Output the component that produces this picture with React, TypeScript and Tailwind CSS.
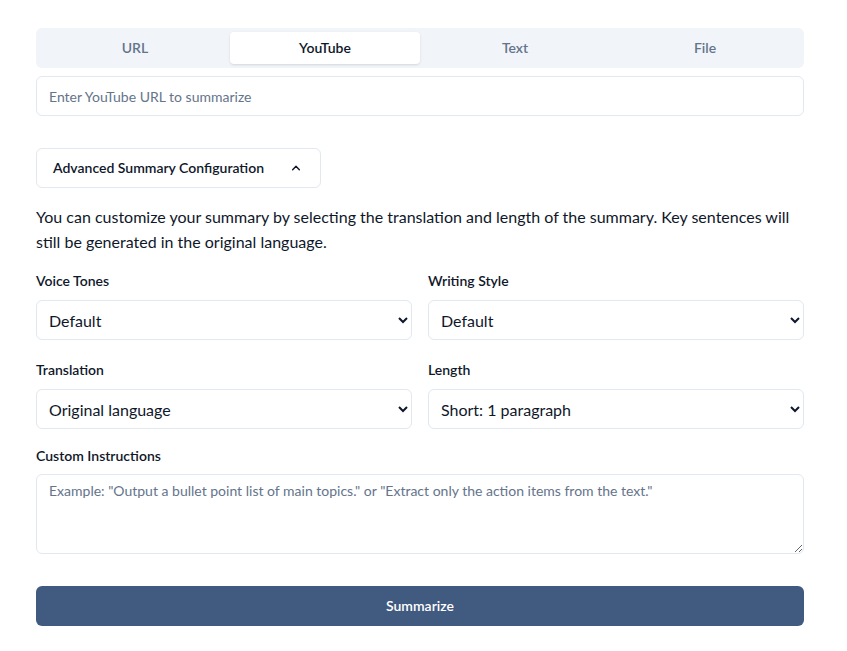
import React from "react";

export default function App() {
  const tabs = ["URL", "YouTube", "Text", "File"];
  return (
    <div className="min-h-screen bg-white" style={{ fontFamily: "Lato, 'Noto Sans', sans-serif" }}>
      <div className="ml-9 w-[768px] pt-7 pb-6">
        <div className="grid h-10 grid-cols-4 rounded-md bg-[#f1f5f9] p-1">
          {tabs.map((t) => (
            <div
              key={t}
              className={
                "flex items-center justify-center rounded-[4px] text-sm font-semibold " +
                (t === "YouTube" ? "bg-white text-[#0f172a] shadow-sm" : "text-[#64748b]")
              }
            >
              {t}
            </div>
          ))}
        </div>
        <input
          className="mt-2 h-10 w-full rounded-md border border-[#e2e8f0] px-3 text-sm outline-none placeholder:text-[#64748b]"
          placeholder="Enter YouTube URL to summarize"
        />
        <button className="mt-8 flex h-10 w-[285px] items-center justify-between rounded-md border border-[#e2e8f0] pl-4 pr-4 text-sm font-semibold text-[#0f172a]">
          Advanced Summary Configuration
          <svg width="16" height="16" viewBox="0 0 24 24" fill="none" stroke="currentColor" strokeWidth="2.2" strokeLinecap="round" strokeLinejoin="round">
            <path d="m17 14.5-5-5-5 5" />
          </svg>
        </button>
        <p className="mt-4 text-base leading-[25px] text-[#0f172a]">
          You can customize your summary by selecting the translation and length of the summary. Key sentences will still be generated in the original language.
        </p>
        <div className="mt-[17px] grid grid-cols-2 gap-x-4 gap-y-5">
          {[
            ["Voice Tones", "Default"],
            ["Writing Style", "Default"],
            ["Translation", "Original language"],
            ["Length", "Short: 1 paragraph"],
          ].map(([l, v]) => (
            <div key={l} className="flex flex-col gap-[9px]">
              <label className="text-sm font-semibold text-[#0f172a]">{l}</label>
              <select className="h-10 w-full rounded-md border border-[#e2e8f0] bg-white px-2 text-base text-[#0f172a] outline-none">
                <option>{v}</option>
              </select>
            </div>
          ))}
        </div>
        <div className="mt-[17px] flex flex-col gap-2">
          <label className="text-sm font-semibold text-[#0f172a]">Custom Instructions</label>
          <textarea
            className="h-20 w-full rounded-md border border-[#e2e8f0] px-3 py-[6px] text-sm outline-none placeholder:text-[#64748b]"
            placeholder={'Example: "Output a bullet point list of main topics." or "Extract only the action items from the text."'}
          />
        </div>
        <button className="mt-8 flex h-10 w-full items-center justify-center rounded-md bg-[#415a7f] text-sm font-semibold text-white">
          Summarize
        </button>
      </div>
    </div>
  );
}
